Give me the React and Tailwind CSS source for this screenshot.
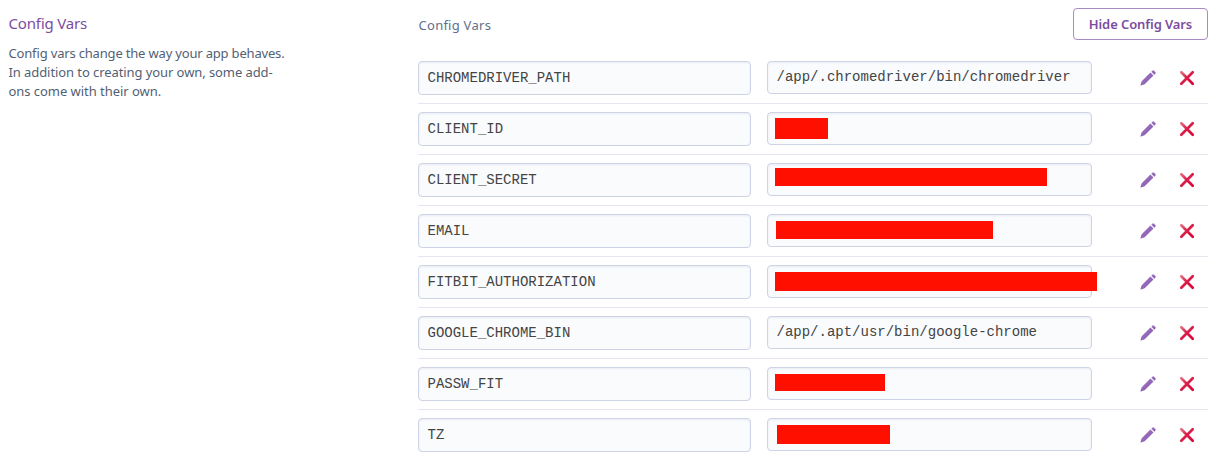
const rows = [
  { name: 'CHROMEDRIVER_PATH', value: '/app/.chromedriver/bin/chromedriver' },
  { name: 'CLIENT_ID', mask: 'left-[7px] top-[5px] w-[53px] h-[21px]' },
  { name: 'CLIENT_SECRET', mask: 'left-[7px] top-[4px] w-[272px] h-[18px]' },
  { name: 'EMAIL', mask: 'left-[8px] top-[6px] w-[217px] h-[18px]' },
  { name: 'FITBIT_AUTHORIZATION', mask: 'left-[7px] top-[6px] w-[322px] h-[19px]' },
  { name: 'GOOGLE_CHROME_BIN', value: '/app/.apt/usr/bin/google-chrome' },
  { name: 'PASSW_FIT', mask: 'left-[7px] top-[6px] w-[110px] h-[17px]' },
  { name: 'TZ', mask: 'left-[9px] top-[6px] w-[113px] h-[19px]' },
];

function Gradients() {
  return (
    <svg className="absolute size-0" aria-hidden="true">
      <defs>
        <linearGradient id="pencil" x1="0" y1="0" x2="1" y2="1">
          <stop offset="0" stopColor="#a279c6" />
          <stop offset="1" stopColor="#8457aa" />
        </linearGradient>
        <linearGradient id="cross" gradientUnits="userSpaceOnUse" x1="1" y1="1" x2="15" y2="15">
          <stop offset="0" stopColor="#e8808c" />
          <stop offset="0.45" stopColor="#d9204a" />
          <stop offset="1" stopColor="#dc0034" />
        </linearGradient>
      </defs>
    </svg>
  );
}

function Pencil() {
  return (
    <svg className="size-4" viewBox="0 0 16 16" fill="url(#pencil)">
      <path d="M10.4 2.5 13.5 5.6 4.9 13.9Q4.1 14.5 3.2 14.8L1 15.5Q0.3 15.6 0.5 14.9L1.2 12.6Q1.5 11.5 2.2 10.8Z" />
      <path d="M11.3 1.7 12.3 0.7Q13.2 0 14 0.7L15.4 2.1Q16 2.9 15.3 3.7L14.3 4.7Z" />
    </svg>
  );
}

function Cross() {
  return (
    <svg className="size-4" viewBox="0 0 16 16" fill="none" stroke="url(#cross)" strokeWidth="2.7" strokeLinecap="round">
      <path d="M2.3 2.3 13.7 13.7M13.7 2.3 2.3 13.7" />
    </svg>
  );
}

const field =
  "rounded-[4px] border border-[#cfd3e6] bg-[#f9fbfd] pl-[8.5px] font-['Liberation_Mono',monospace] text-[14px] text-[#444] shadow-[inset_0_1px_2px_rgba(207,215,230,0.4)]";

function Row({ name, value, mask, last }) {
  return (
    <div className={`flex h-[51px] items-start pt-2 ${last ? '' : 'border-b border-[#e4e5f1]'}`}>
      <div className={`${field} h-[34px] w-[333px] leading-[33px]`}>{name}</div>
      <div className={`${field} relative ml-4 h-[33px] w-[325px] leading-[30px]`}>
        {value}
        {mask && <span className={`absolute bg-[#ff0f00] ${mask}`} />}
      </div>
      <div className="ml-12 flex gap-[23px] pt-[9px]">
        <button aria-label="Edit"><Pencil /></button>
        <button aria-label="Remove"><Cross /></button>
      </div>
    </div>
  );
}

export default function App() {
  return (
    <div className="flex h-[459px] w-[1216px] overflow-hidden bg-white pl-2 font-['Noto_Sans',sans-serif] [font-feature-settings:'liga']">
      <Gradients />
      <aside className="w-[410px] shrink-0 pl-[0.5px] pt-[13px]">
        <h2 className="text-[15px] leading-[21px] tracking-[-0.2px] text-[#7c4da0]">Config Vars</h2>
        <p className="mt-[10px] whitespace-nowrap text-[13px] leading-[19px] tracking-[-0.08px] text-[#535f74]">
          <span className="tracking-[-0.18px]">Config vars change the way your app behaves.</span><br />In addition to creating your own, some add-<br /><span className="tracking-[-0.04px]">ons come with their own.</span>
        </p>
      </aside>
      <main className="w-[790px] shrink-0">
        <header className="flex h-[53px] items-start justify-between pt-2">
          <h3 className="pl-[0.5px] pt-[8px] text-[13px] leading-[19px] tracking-[0.3px] text-[#62708c]">Config Vars</h3>
          <button className="h-8 w-[135px] rounded-[4px] border border-[#a98bc7] text-[13px] font-semibold leading-[29px] tracking-[-0.1px] text-[#7c4da0]">
            Hide Config Vars
          </button>
        </header>
        {rows.map((row, i) => (
          <Row key={row.name} {...row} last={i === rows.length - 1} />
        ))}
      </main>
    </div>
  );
}
